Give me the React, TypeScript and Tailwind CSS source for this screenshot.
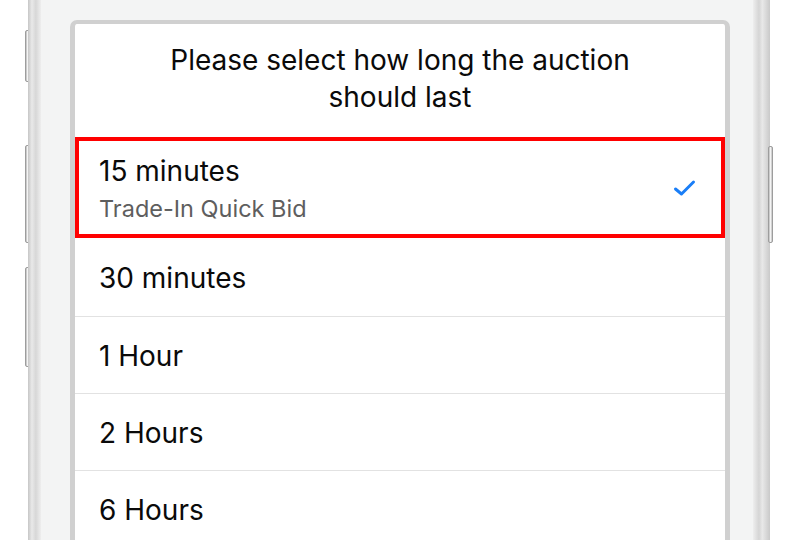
const OPTIONS = ['30 minutes', '1 Hour', '2 Hours', '6 Hours'];

function SideButton({ className }: { className: string }) {
  return (
    <div
      className={`w-[5px] rounded-[2px] border border-[#9d9d9d] bg-[linear-gradient(to_right,#b8b8b8,#f4f4f4_50%,#c0c0c0)] ${className}`}
    />
  );
}

function CheckIcon() {
  return (
    <svg width="23" height="18" viewBox="0 0 23 18" fill="none">
      <path d="M2.5 10 L8.5 15 L20.5 3" stroke="#1a7ef7" strokeWidth="3" strokeLinecap="round" strokeLinejoin="round" />
    </svg>
  );
}

export default function App() {
  return (
    <div
      className="w-[800px] h-[540px] bg-white flex overflow-hidden"
      style={{ fontFamily: 'Inter, "Noto Sans", sans-serif' }}
    >
      {/* left volume buttons */}
      <div className="w-[28px] flex flex-col items-end">
        <SideButton className="mt-[30px] h-[52px] -mr-[2px]" />
        <SideButton className="mt-[63px] h-[98px] -mr-[2px]" />
        <SideButton className="mt-[24px] h-[100px] -mr-[2px]" />
      </div>

      {/* phone edge */}
      <div className="w-[13px] bg-[linear-gradient(to_right,#c6c6c6,#e9e9e9_30%,#d7d7d7_60%,#eeeeee)]" />
      <div className="w-[29px] bg-[#f3f4f4]" />

      {/* screen */}
      <div className="w-[660px] bg-[#f3f4f4] pt-[20px] flex flex-col">
        <div className="flex-1 flex flex-col bg-white border-x-[5px] border-t-[4px] border-[#d0d0d0] rounded-t-[7px]">
          <div className="h-[113px] pt-[18px] text-center text-[28px] leading-[37px] text-[#0a0a0a]">
            <p>Please select how long the auction</p>
            <p>should last</p>
          </div>

          <div className="h-[101px] border-4 border-[#ff0000] flex items-center pl-[20px] pr-[25px]">
            <div className="flex-1 flex flex-col pt-[1px]">
              <span className="text-[28px] leading-[34px] text-[#0a0a0a]">15 minutes</span>
              <span className="mt-[7px] text-[23.5px] leading-[28px] text-[#5e5e5e]">Trade-In Quick Bid</span>
            </div>
            <CheckIcon />
          </div>

          {OPTIONS.map((label, i) => (
            <div
              key={label}
              className={`${i === 0 ? 'h-[79px]' : 'h-[77px]'} shrink-0 border-b border-[#e2e2e2] flex items-center pt-[2px] pl-[24px] text-[28px] text-[#0a0a0a]`}
            >
              {label}
            </div>
          ))}
        </div>
      </div>

      <div className="w-[23px] bg-[#f3f4f4]" />
      <div className="w-[17px] bg-[linear-gradient(to_right,#eeeeee,#d5d5d5_35%,#e8e8e8_55%,#c9c9c9)]" />

      {/* right power button */}
      <div className="w-[30px] flex flex-col items-start">
        <SideButton className="mt-[146px] h-[97px] -ml-[2px]" />
      </div>
    </div>
  );
}
